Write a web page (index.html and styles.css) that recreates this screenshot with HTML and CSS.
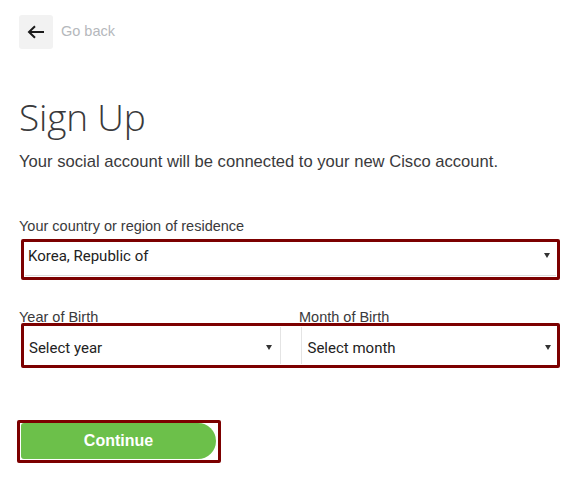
FILE: index.html
```html
<!DOCTYPE html>
<html>
<head>
<meta charset="utf-8">
<link rel="stylesheet" href="styles.css">
</head>
<body>
<div class="page">
  <div class="back-row">
    <button class="back-btn" aria-label="Go back">
      <svg width="18" height="14" viewBox="0 0 18 14"><path d="M17 7H2.5M8 1.2L2 7l6 5.8" fill="none" stroke="#1b1b1b" stroke-width="2"/></svg>
    </button>
    <span class="back-text">Go back</span>
  </div>

  <h1 class="title">Sign Up</h1>
  <p class="subtitle">Your social account will be connected to your new Cisco account.</p>

  <div class="field">
    <label class="label">Your country or region of residence</label>
    <div class="highlight">
      <div class="select country">
        <span>Korea, Republic of</span>
        <span class="caret"></span>
      </div>
    </div>
  </div>

  <div class="field birth">
    <div class="labels">
      <label class="label">Year of Birth</label>
      <label class="label">Month of Birth</label>
    </div>
    <div class="highlight">
      <div class="pair">
        <div class="select year"><span>Select year</span><span class="caret"></span></div>
        <div class="select month"><span>Select month</span><span class="caret"></span></div>
      </div>
    </div>
  </div>

  <div class="btn-highlight">
    <button class="continue">Continue</button>
  </div>
</div>
</body>
</html>
```

FILE: styles.css
```css
* { box-sizing: border-box; }
html, body { margin: 0; padding: 0; background: #fff; }
body { font-family: "Liberation Sans", Arial, sans-serif; color: #39393b; }
.page { padding: 15px 22px 0 19px; width: 582px; }

.back-row { display: flex; align-items: center; gap: 8px; height: 34px; }
.back-btn {
  width: 34px; height: 34px; border: 0; border-radius: 3px;
  background: #f2f2f2; display: flex; align-items: center; justify-content: center; padding: 0;
}
.back-text { color: #b5b8bc; font-size: 14.5px; line-height: 16px; margin-top: -3px; }

.title {
  margin: 48px 0 0 0; font-family: "Open Sans", sans-serif; font-weight: 300;
  font-size: 37px; line-height: 40px; color: #39393b; letter-spacing: -0.2px;
}
.subtitle { margin: 15px 0 0 0; font-size: 16.6px; line-height: 20px; color: #3a3a3c; }

.field { margin-top: 46px; }
.label { display: block; font-size: 14.5px; line-height: 16px; color: #3a3a3c; margin-bottom: 5px; }

.highlight {
  margin-left: 2px; width: 539px;
  border: 3px solid #7c0000; border-radius: 2px; padding: 1px;
}
.select {
  display: flex; align-items: center; justify-content: space-between;
  font-family: Roboto, sans-serif; font-size: 15px; color: #222;
  background: #fff;
}
.country { height: 33px; padding: 0 6px 7px 3px; border-bottom: 1px solid #dcdcdc; }
.caret {
  width: 0; height: 0; border-left: 3.5px solid transparent; border-right: 3.5px solid transparent;
  border-top: 5px solid #333;
}

.birth { margin-top: 31px; }
.labels { display: grid; grid-template-columns: 280px 1fr; }
.labels .label { margin-bottom: 0; line-height: 12px; }
.pair { display: grid; grid-template-columns: 1fr 1fr; gap: 20px; height: 37px; }
.year { padding: 4px 8px 0 4px; border-right: 1px solid #e4e4e4; }
.month { padding: 4px 5px 0 6px; border-left: 1px solid #e4e4e4; }

.btn-highlight {
  margin-top: 52px; margin-left: -2px; width: 204px; height: 43px;
  border: 3px solid #7c0000; border-radius: 2px; padding: 0 2px 0 1px;
}
.continue {
  width: 195px; height: 36px; margin-top: 0; border: 0;
  background: #6cc04a; color: #fff; font-family: "Liberation Sans", Arial, sans-serif;
  font-weight: bold; font-size: 16px; border-radius: 3px 18px 18px 3px; display: block;
}
```
